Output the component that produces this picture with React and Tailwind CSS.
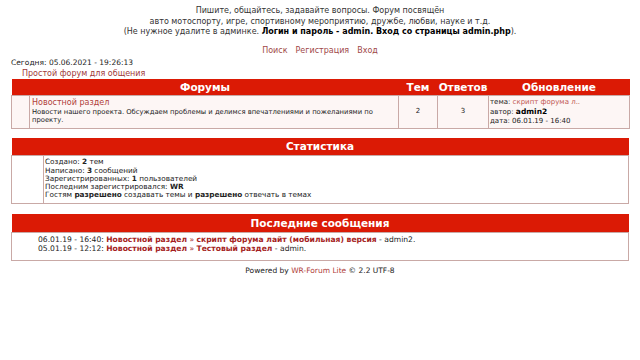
export default function App() {
  const f = { fontFamily: '"DejaVu Sans", Verdana, sans-serif' };
  return (
    <div className="w-[640px] h-[360px] bg-white text-[#222] overflow-hidden" style={f}>
      <div className="pt-[6px] text-center text-[8px] leading-[10.5px] text-[#333]">
        <div>Пишите, общайтесь, задавайте вопросы. Форум посвящён</div>
        <div>авто мотоспорту, игре, спортивному мероприятию, дружбе, любви, науке и т.д.</div>
        <div>
          (Не нужное удалите в админке. <b className="text-black">Логин и пароль - admin. Вход со страницы admin.php</b>).
        </div>
      </div>
      <div className="mt-[8px] flex justify-center gap-[8px] text-[8px] leading-[10px] text-[#a04848]">
        <span>Поиск</span>
        <span>Регистрация</span>
        <span>Вход</span>
      </div>
      <div className="pl-[11px] mt-[1px] text-[7.5px] leading-[11px] text-[#222]">Сегодня: 05.06.2021 - 19:26:13</div>
      <div className="pl-[22px] text-[8px] leading-[11px] text-[#a03a3a]">Простой форум для общения</div>

      <div className="px-[11px]">
        <table className="w-[618px] border-collapse table-fixed">
          <colgroup>
            <col className="w-[18px]" />
            <col className="w-[369px]" />
            <col className="w-[39px]" />
            <col className="w-[51px]" />
            <col className="w-[141px]" />
          </colgroup>
          <thead>
            <tr className="bg-[#db1a05] text-white text-[10.5px] font-bold h-[16px] leading-[16px]">
              <th colSpan={2} className="p-0 text-center">Форумы</th>
              <th className="p-0 text-center">Тем</th>
              <th className="p-0 text-center">Ответов</th>
              <th className="p-0 text-center">Обновление</th>
            </tr>
          </thead>
          <tbody>
            <tr className="h-[33px] bg-[#fdf6f5] text-[7px] leading-[8.5px]">
              <td className="border border-[#c9a9a6]"></td>
              <td className="border border-[#c9a9a6] px-[2px] align-top pt-[2px]">
                <div className="text-[8px] leading-[10px] text-[#b0403a]">Новостной раздел</div>
                <div className="text-[6.8px] pr-[20px]">Новости нашего проекта. Обсуждаем проблемы и делимся впечатлениями и пожеланиями по проекту.</div>
              </td>
              <td className="border border-[#c9a9a6] text-center">2</td>
              <td className="border border-[#c9a9a6] text-center">3</td>
              <td className="border border-[#c9a9a6] px-[1px] leading-[9px] pt-[1px]">
                <div>тема: <span className="text-[#c05550]">скрипт форума л..</span></div>
                <div>автор: <b className="text-black text-[7.5px]">admin2</b></div>
                <div>дата: 06.01.19 - 16:40</div>
              </td>
            </tr>
          </tbody>
        </table>

        <table className="w-[618px] border-collapse table-fixed mt-[9px]">
          <colgroup>
            <col className="w-[32px]" />
            <col />
          </colgroup>
          <thead>
            <tr className="bg-[#db1a05] text-white text-[10.5px] font-bold h-[17px] leading-[17px]">
              <th colSpan={2} className="p-0 text-center">Статистика</th>
            </tr>
          </thead>
          <tbody>
            <tr className="h-[48px] bg-white text-[7.3px] leading-[8.3px]">
              <td className="border border-[#c9a9a6]"></td>
              <td className="border border-[#c9a9a6] px-[1px] pt-[2px] pb-[2px]">
                <div>Создано: <b>2</b> тем</div>
                <div>Написано: <b>3</b> сообщений</div>
                <div>Зарегистрированных: <b>1</b> пользователей</div>
                <div>Последним зарегистрировался: <b>WR</b></div>
                <div>Гостям <b>разрешено</b> создавать темы и <b>разрешено</b> отвечать в темах</div>
              </td>
            </tr>
          </tbody>
        </table>

        <table className="w-[618px] border-collapse table-fixed mt-[10px]">
          <thead>
            <tr className="bg-[#db1a05] text-white text-[10.5px] font-bold h-[18px] leading-[18px]">
              <th className="p-0 text-center">Последние сообщения</th>
            </tr>
          </thead>
          <tbody>
            <tr className="h-[28px] bg-white text-[7.6px] leading-[9px]">
              <td className="border border-[#c9a9a6] pl-[26px] align-top pt-[2px]">
                <div>
                  06.01.19 - 16:40: <b className="text-[#a51e1e]">Новостной раздел</b> <span className="text-[#a51e1e]">»</span> <b className="text-[#a51e1e]">скрипт форума лайт (мобильная) версия</b> - admin2.
                </div>
                <div>
                  05.01.19 - 12:12: <b className="text-[#a51e1e]">Новостной раздел</b> <span className="text-[#a51e1e]">»</span> <b className="text-[#a51e1e]">Тестовый раздел</b> - admin.
                </div>
              </td>
            </tr>
          </tbody>
        </table>
      </div>

      <div className="mt-[5px] text-center text-[7.5px] leading-[10px] text-[#222]">
        Powered by <span className="text-[#b0403a]">WR-Forum Lite</span> © 2.2 UTF-8
      </div>
    </div>
  );
}
